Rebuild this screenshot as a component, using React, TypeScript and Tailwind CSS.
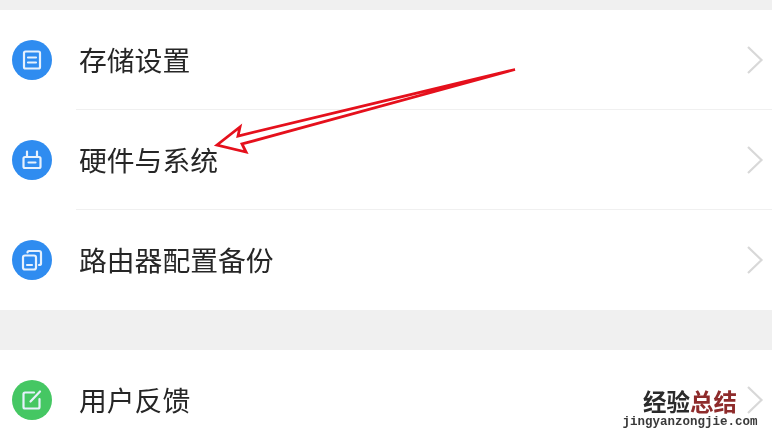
const FONT = "font-['Noto_Sans_CJK_SC','Noto_Sans',sans-serif]";

function Circle({ color, children }: { color: string; children: React.ReactNode }) {
  return (
    <svg width="40" height="40" viewBox="0 0 40 40" className="shrink-0 blur-[0.4px]">
      <circle cx="20" cy="20" r="20" fill={color} />
      <g fill="none" stroke="#e6f1fd" strokeWidth="2.2" strokeLinejoin="round" strokeLinecap="round">
        {children}
      </g>
    </svg>
  );
}

function Chevron() {
  return (
    <svg width="18" height="30" viewBox="0 0 18 30" className="shrink-0 blur-[0.5px]">
      <path d="M2 2 L15.5 15 L2 28" fill="none" stroke="#d8d8d8" strokeWidth="2.2" />
    </svg>
  );
}

function Row({ icon, label, divider, h }: { icon: React.ReactNode; label: string; divider?: boolean; h: string }) {
  return (
    <div className={`flex items-stretch pl-3 bg-white ${h}`}>
      <div className="flex items-center w-[64px] shrink-0">{icon}</div>
      <div className={`flex flex-1 items-center justify-between pl-[3px] pr-2 ${divider ? "border-b border-[#f0f0f0]" : ""}`}>
        <span className="text-[27.8px] leading-none text-[#262626] blur-[0.3px]">{label}</span>
        <Chevron />
      </div>
    </div>
  );
}

export default function App() {
  return (
    <div className={`relative w-[772px] h-[438px] overflow-hidden bg-[#f0f0f0] ${FONT}`}>
      <div className="h-[10px]" />
      <Row
        h="h-[100px]"
        divider
        label="存储设置"
        icon={
          <Circle color="#2f8cf0">
            <rect x="12" y="11.5" width="16" height="17" rx="1.5" />
            <path d="M16 17.5h8M16 22.5h8" />
          </Circle>
        }
      />
      <Row
        h="h-[100px]"
        divider
        label="硬件与系统"
        icon={
          <Circle color="#2f8cf0">
            <rect x="11.5" y="17" width="17" height="11" rx="1.5" />
            <path d="M15 11.5v5M25 11.5v5M16.5 22.5h7" />
          </Circle>
        }
      />
      <Row
        h="h-[100px]"
        label="路由器配置备份"
        icon={
          <Circle color="#2f8cf0">
            <rect x="11" y="15.5" width="13" height="14" rx="2" />
            <path d="M15.5 12.5 Q15.5 11 17 11 H27 Q29 11 29 13 V23.5 Q29 25 27 25" />
            <path d="M15 25h5" />
          </Circle>
        }
      />
      <div className="h-[40px]" />
      <Row
        h="h-[100px]"
        label="用户反馈"
        icon={
          <Circle color="#45c763">
            <path d="M22 12.5H13a1.5 1.5 0 0 0-1.5 1.5v13a1.5 1.5 0 0 0 1.5 1.5h13a1.5 1.5 0 0 0 1.5-1.5V19" />
            <path d="M18.5 21.5 L28 11.5" />
          </Circle>
        }
      />

      {/* hand-drawn annotation arrow */}
      <svg width="772" height="438" viewBox="0 0 772 438" className="absolute inset-0 pointer-events-none">
        <path
          d="M515 69.5 L238 136 L240 127 L217 145 L246 152 L242 144 Z"
          fill="none"
          stroke="#e5101c"
          strokeWidth="2.8"
          strokeLinejoin="miter"
        />
      </svg>

      {/* watermark */}
      <div className="absolute left-[622px] top-[388px] w-[136px] flex flex-col items-center blur-[0.3px]">
        <div className="flex text-[23.5px] leading-[26px] font-bold font-['Noto_Sans_CJK_SC',sans-serif]">
          <span className="text-[#2b2b2b]">经验</span>
          <span className="text-[#8e2b2b]">总结</span>
        </div>
        <div className="font-['Liberation_Mono',monospace] font-bold text-[12.5px] leading-[16px] text-[#3a3a3a] whitespace-nowrap">
          jingyanzongjie.com
        </div>
      </div>
    </div>
  );
}
